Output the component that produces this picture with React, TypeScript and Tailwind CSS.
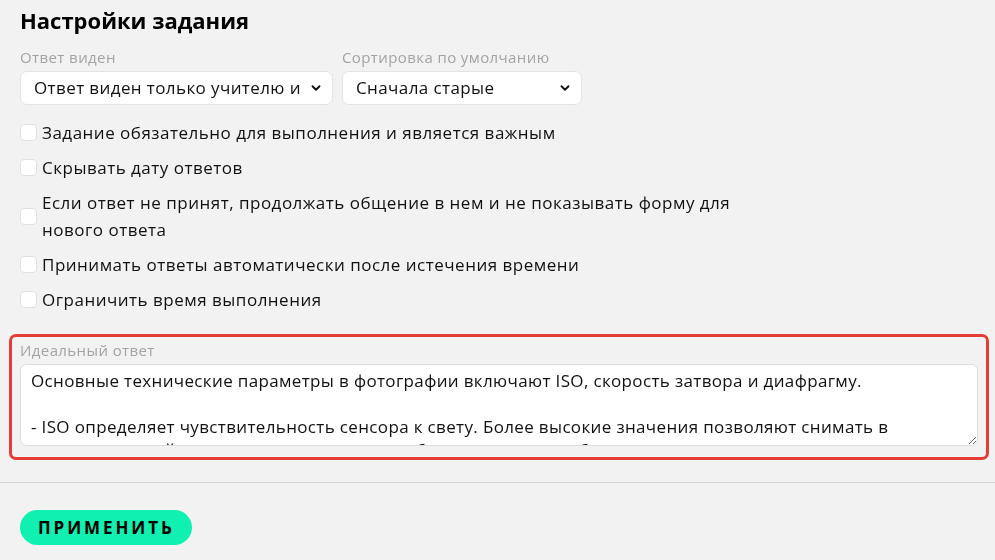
import React, { useState } from 'react';

const font = { fontFamily: '"Open Sans", "Noto Sans", sans-serif' };

interface Option {
  id: string;
  label: string;
}

const options: Option[] = [
  { id: 'required', label: 'Задание обязательно для выполнения и является важным' },
  { id: 'hideDate', label: 'Скрывать дату ответов' },
  {
    id: 'continue',
    label: 'Если ответ не принят, продолжать общение в нем и не показывать форму для нового ответа',
  },
  { id: 'autoAccept', label: 'Принимать ответы автоматически после истечения времени' },
  { id: 'limit', label: 'Ограничить время выполнения' },
];

const idealAnswer = `Основные технические параметры в фотографии включают ISO, скорость затвора и диафрагму.

- ISO определяет чувствительность сенсора к свету. Более высокие значения позволяют снимать в условиях низкой освещенности, но могут добавить шум на изображение.`;

function Chevron() {
  return (
    <svg width="14" height="14" viewBox="0 0 24 24" fill="none" stroke="#111" strokeWidth="3.2" strokeLinecap="round" strokeLinejoin="round">
      <path d="M6 9l6 6 6-6" />
    </svg>
  );
}

function Select({ label, value, width }: { label: string; value: string; width: string }) {
  return (
    <div className={`flex flex-col ${width}`}>
      <span className="text-[15px] leading-[20px] tracking-[0.4px] text-[#a3a3a3] mb-[4px]">{label}</span>
      <div className="h-[34px] bg-white border border-[#e3e3e3] rounded-[7px] flex items-center justify-between pl-[13px] pr-[9px]">
        <span className="text-[17px] tracking-[0.4px] text-[#111] whitespace-nowrap overflow-hidden">{value}</span>
        <Chevron />
      </div>
    </div>
  );
}

export default function App() {
  const [checked, setChecked] = useState<Record<string, boolean>>({});

  return (
    <div className="min-h-screen bg-[#f2f2f2] text-[#111]" style={font}>
      <div className="px-[20px] pt-[4px]">
        <h1 className="text-[22px] font-bold leading-[32px] text-black">Настройки задания</h1>

        <div className="flex gap-[9px] mt-[11px]">
          <Select label="Ответ виден" value="Ответ виден только учителю и" width="w-[313px]" />
          <Select label="Сортировка по умолчанию" value="Сначала старые" width="w-[240px]" />
        </div>

        <div className="flex flex-col gap-[8px] mt-[14px] w-[740px]">
          {options.map((o) => (
            <label key={o.id} className="flex items-center gap-[5px] cursor-pointer">
              <input
                type="checkbox"
                className="appearance-none shrink-0 w-[17px] h-[17px] bg-white border border-[#e0e0e0] rounded-[4px]"
                checked={!!checked[o.id]}
                onChange={() => setChecked({ ...checked, [o.id]: !checked[o.id] })}
              />
              <span className="text-[17px] leading-[27px] tracking-[0.5px]">{o.label}</span>
            </label>
          ))}
        </div>
      </div>

      <div className="ml-[9px] mr-[6px] mt-[21px] border-[3px] border-[#e53d35] rounded-[7px] pl-[8px] pr-[8px] pt-[3px] pb-[11px]">
        <span className="block text-[15px] leading-[20px] tracking-[0.4px] text-[#a3a3a3] mb-[4px]">Идеальный ответ</span>
        <textarea
          readOnly
          value={idealAnswer}
          className="block w-full h-[82px] bg-white border border-[#dcdcdc] rounded-[7px] px-[10px] py-[4px] text-[17px] leading-[23px] tracking-[0.35px] text-[#111] resize-y outline-none"
          style={font}
        />
      </div>

      <div className="mt-[22px] border-t border-[#d4d4d4]" />

      <div className="px-[20px] pt-[27px]">
        <button className="h-[35px] pl-[18px] pr-[17px] rounded-full bg-[#10f0b0] text-[17px] font-bold tracking-[2.9px] text-black">
          ПРИМЕНИТЬ
        </button>
      </div>
    </div>
  );
}
